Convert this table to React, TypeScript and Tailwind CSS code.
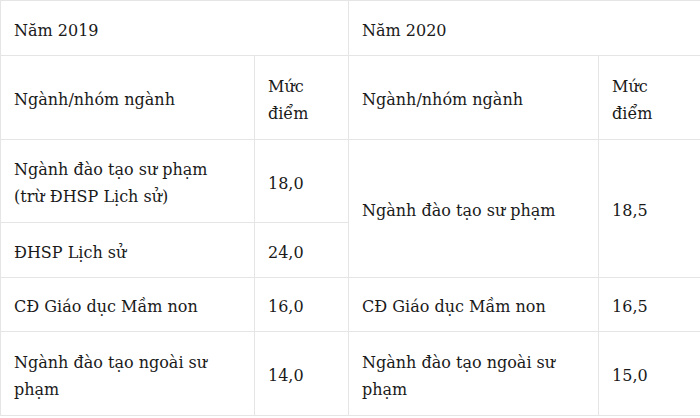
export default function App() {
  const cell = 'border border-[#e5e5e5] px-[13px] pt-[15px] pb-[11px] align-middle';
  return (
    <div className="bg-white w-[700px] h-[418px] overflow-hidden">
      <table
        className="w-[700px] table-fixed border-collapse text-[16px] leading-[27px] text-[#1a1a1a]"
        style={{ fontFamily: '"DejaVu Serif", "Liberation Serif", serif' }}
      >
        <colgroup>
          <col className="w-[254px]" />
          <col className="w-[94px]" />
          <col className="w-[250px]" />
          <col className="w-[102px]" />
        </colgroup>
        <tbody>
          <tr className="h-[55px]">
            <td colSpan={2} className={cell}>Năm 2019</td>
            <td colSpan={2} className={cell}>Năm 2020</td>
          </tr>
          <tr className="h-[84px]">
            <td className={cell}>Ngành/nhóm ngành</td>
            <td className={cell}>Mức điểm</td>
            <td className={cell}>Ngành/nhóm ngành</td>
            <td className={cell}>Mức điểm</td>
          </tr>
          <tr className="h-[83px]">
            <td className={cell}>Ngành đào tạo sư phạm (trừ ĐHSP Lịch sử)</td>
            <td className={cell}>18,0</td>
            <td rowSpan={2} className={cell}>Ngành đào tạo sư phạm</td>
            <td rowSpan={2} className={cell}>18,5</td>
          </tr>
          <tr className="h-[55px]">
            <td className={cell}>ĐHSP Lịch sử</td>
            <td className={cell}>24,0</td>
          </tr>
          <tr className="h-[54px]">
            <td className={cell}>CĐ Giáo dục Mầm non</td>
            <td className={cell}>16,0</td>
            <td className={cell}>CĐ Giáo dục Mầm non</td>
            <td className={cell}>16,5</td>
          </tr>
          <tr className="h-[84px]">
            <td className={cell}>Ngành đào tạo ngoài sư phạm</td>
            <td className={cell}>14,0</td>
            <td className={cell}>Ngành đào tạo ngoài sư phạm</td>
            <td className={cell}>15,0</td>
          </tr>
        </tbody>
      </table>
    </div>
  );
}
